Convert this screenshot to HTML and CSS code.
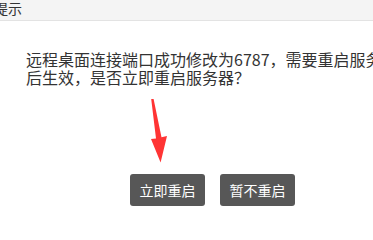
FILE: index.html
```html
<!DOCTYPE html>
<html lang="zh-CN">
<head>
<meta charset="utf-8">
<link rel="stylesheet" href="styles.css">
</head>
<body>
<div class="dialog">
  <div class="dialog-header"><span class="dialog-title">提示</span></div>
  <div class="dialog-body">
    <p class="message">远程桌面连接端口成功修改为6787，需要重启服务器后生效，是否立即重启服务器？</p>
  </div>
  <div class="dialog-actions">
    <button class="btn">立即重启</button>
    <button class="btn">暂不重启</button>
  </div>
  <svg class="annotation-arrow" width="20" height="66" viewBox="150 98 20 66">
    <polygon points="151.2,99 153.6,99 161.5,137.2 167,136 160.6,162.5 151,139 156,138.4" fill="#ff3434"/>
  </svg>
</div>
</body>
</html>
```
FILE: styles.css
```css
html, body {
  margin: 0;
  padding: 0;
  background: #ffffff;
  overflow: hidden;
  width: 373px;
  height: 207px;
}

.dialog {
  position: relative;
  width: 425px;
  font-family: "Noto Sans CJK SC", "Noto Sans", sans-serif;
  color: #333333;
}

.dialog-header {
  height: 20px;
  background: #f4f4f4;
  border-bottom: 1px solid #e3e3e3;
  display: flex;
  align-items: center;
}

.dialog-title {
  margin-left: -6px;
  font-size: 14px;
  line-height: 20px;
  color: #333333;
  margin-top: -5px;
}

.dialog-body {
  padding: 29px 19px 0 26px;
  height: 124px;
  box-sizing: border-box;
}

.message {
  margin: 0;
  font-size: 16px;
  line-height: 18px;
  color: #333333;
}

.dialog-actions {
  display: flex;
  justify-content: center;
  gap: 15px;
  padding-top: 29px;
}

.btn {
  width: 75px;
  height: 32px;
  border: none;
  border-radius: 3px;
  background: #575757;
  color: #ffffff;
  font-family: "Noto Sans CJK SC", "Noto Sans", sans-serif;
  font-size: 14px;
  padding: 0;
}

.annotation-arrow {
  position: absolute;
  left: 150px;
  top: 98px;
}
```
